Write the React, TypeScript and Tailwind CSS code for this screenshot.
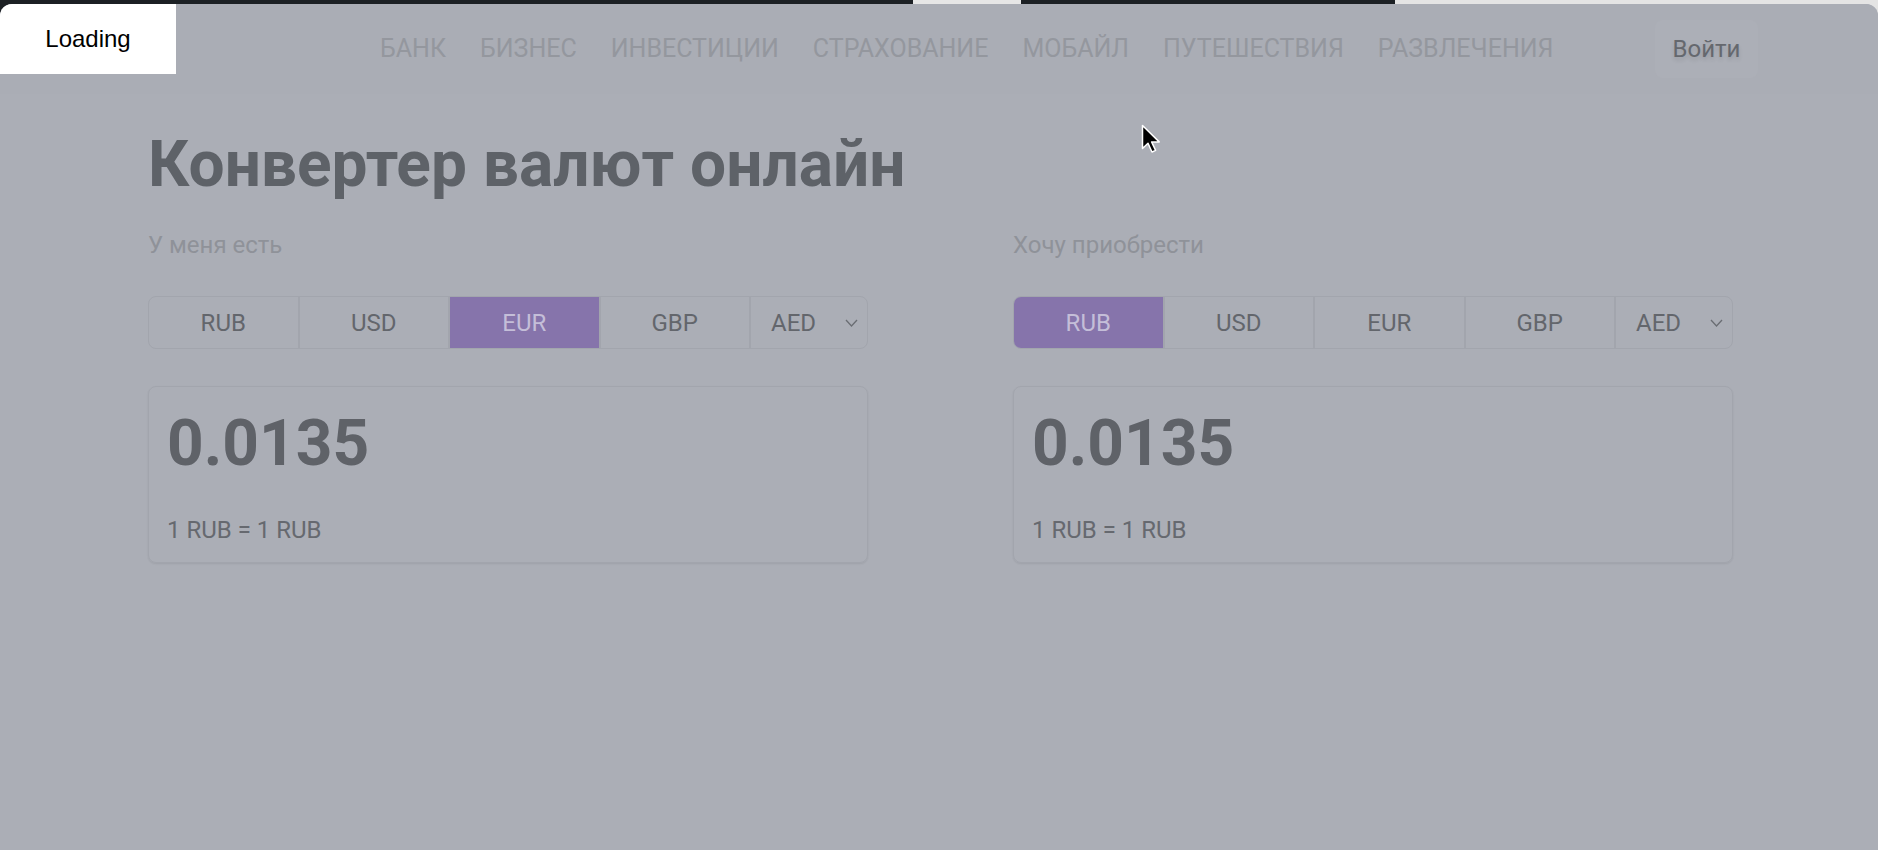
import clsx from "clsx";

const navItems = ["БАНК", "БИЗНЕС", "ИНВЕСТИЦИИ", "СТРАХОВАНИЕ", "МОБАЙЛ", "ПУТЕШЕСТВИЯ", "РАЗВЛЕЧЕНИЯ"];
const currencies = ["RUB", "USD", "EUR", "GBP"];

function Chevron() {
  return (
    <svg width="13" height="8" viewBox="0 0 13 8" fill="none">
      <path d="M1 1l5.5 6L12 1" stroke="#6a6d73" strokeWidth="1.3" />
    </svg>
  );
}

function CurrencyPicker({ active }: { active: string }) {
  return (
    <div className="flex h-[53px] rounded-lg border border-[#a2a5ad] overflow-hidden text-[24px]">
      {currencies.map((c, i) => (
        <button
          key={c}
          className={clsx(
            "flex-1 flex items-center justify-center",
            i > 0 && "border-l-2 border-[#a2a5ad]",
            c === active ? "bg-[#8674ab] text-[#c4bed8]" : "text-[#63666c]"
          )}
        >
          {c}
        </button>
      ))}
      <div className="w-[118px] flex items-center justify-between pl-5 pr-[9px] border-l-2 border-[#a2a5ad] text-[#63666c]">
        AED
        <Chevron />
      </div>
    </div>
  );
}

function Side({ label, active }: { label: string; active: string }) {
  return (
    <div className="flex flex-col">
      <p className="text-[24px] leading-none text-[#8f9299]">{label}</p>
      <div className="mt-[39px]">
        <CurrencyPicker active={active} />
      </div>
      <div className="mt-[37px] rounded-lg border border-[#a2a5ad] pt-[25px] pl-[18px] pr-5 pb-5 shadow-[0_1px_2px_rgba(0,0,0,0.08)]">
        <p className="text-[64px] leading-none font-bold text-[#5f6268]">0.0135</p>
        <p className="mt-[42px] text-[24px] leading-none text-[#66696f]">1 RUB = 1 RUB</p>
      </div>
    </div>
  );
}

export default function App() {
  return (
    <div className="relative h-[850px] w-full overflow-hidden flex flex-col font-['Roboto',sans-serif] bg-[linear-gradient(to_right,#1c2024_74.3%,#e4e4e4_74.3%)]">
      {/* screen strip above the window */}
      <div className="flex h-[4px] shrink-0">
        <div className="w-[913px] bg-[#1c2024]" />
        <div className="w-[108px] bg-[#e6e6e6]" />
        <div className="w-[374px] bg-[#1c2024]" />
        <div className="flex-1 bg-[#e4e4e4]" />
      </div>

      <div className="relative flex-1 rounded-t-[12px] overflow-hidden bg-[#abaeb6]">
        <header className="h-[90px] flex items-center bg-[#aaadb5]">
          <nav className="ml-[380px] flex gap-[34px] text-[25px] text-[#94979e]">
            {navItems.map((n) => (
              <a key={n}>{n}</a>
            ))}
          </nav>
          <button className="ml-auto mr-[120px] w-[103px] h-[58px] rounded-lg bg-[#acafb7] text-[24px] text-[#65686e] [text-shadow:0_3px_4px_rgba(0,0,0,0.12)]">
            Войти
          </button>
        </header>

        <main className="ml-[148px] w-[1585px] pt-[39px]">
          <h1 className="text-[64px] leading-none font-bold text-[#5e6268]">Конвертер валют онлайн</h1>
          <div className="mt-[36px] grid grid-cols-2 gap-x-[145px]">
            <Side label="У меня есть" active="EUR" />
            <Side label="Хочу приобрести" active="RUB" />
          </div>
        </main>

        {/* loading toast */}
        <div className="absolute left-0 top-0 w-[176px] h-[70px] bg-white flex items-center justify-center text-[24px] text-black font-['Liberation_Sans',sans-serif]">
          Loading
        </div>
      </div>

      {/* mouse pointer */}
      <svg className="absolute left-[1141px] top-[124px]" width="20" height="30" viewBox="0 0 20 30">
        <path d="M1.5 1.5v23l5.5-5.2 4 8.7 3.6-1.6-4-8.5h7.6z" fill="#000" stroke="#fff" strokeWidth="1.5" strokeLinejoin="round" />
      </svg>
    </div>
  );
}
